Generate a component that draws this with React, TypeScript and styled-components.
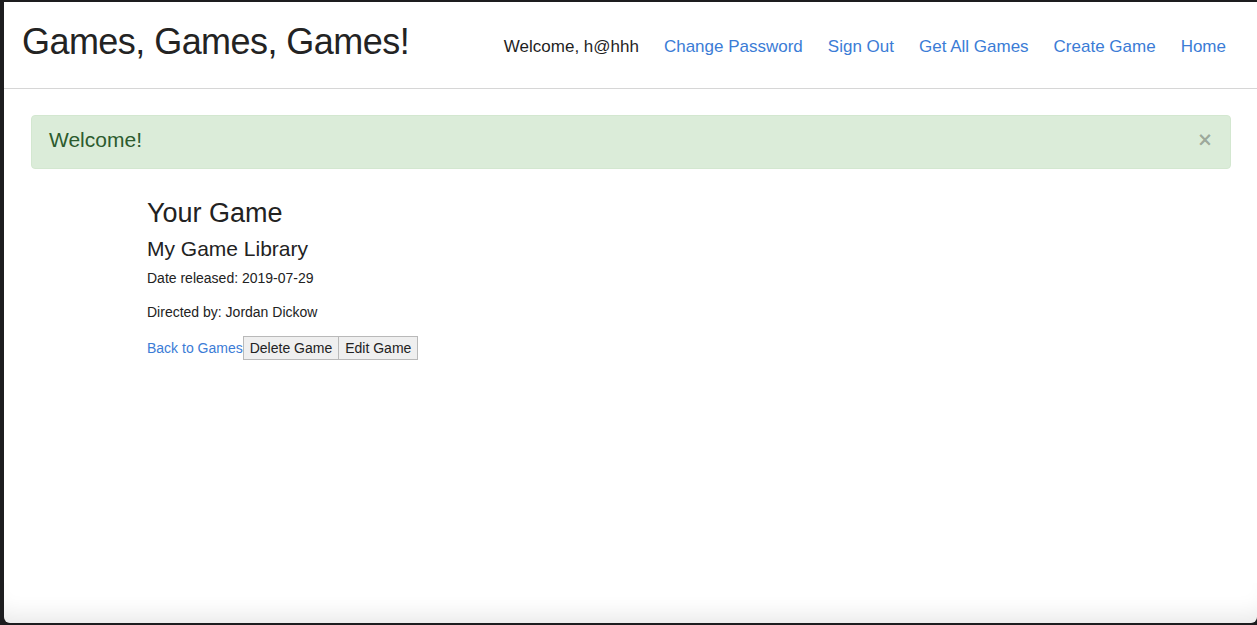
import React from 'react';
import styled, { createGlobalStyle } from 'styled-components';

const GlobalStyle = createGlobalStyle`
  html,
  body {
    margin: 0;
    padding: 0;
    background-color: #1d1d1f;
    overflow: hidden;
  }

  body {
    font-family: 'Liberation Sans', Arial, Helvetica, sans-serif;
    color: #222;
  }
`;

const Window = styled.div`
  position: relative;
  margin: 2px 0 2px 4px;
  height: 621px;
  background-color: #fff;
  border-radius: 0 0 6px 6px;
  overflow: hidden;

  &::after {
    content: '';
    position: absolute;
    left: 0;
    right: 0;
    bottom: 0;
    height: 40px;
    pointer-events: none;
    border-radius: 0 0 6px 6px;
    box-shadow: inset 0 -22px 22px -14px rgba(0, 0, 0, 0.09);
  }
`;

const Header = styled.header`
  display: flex;
  align-items: center;
  justify-content: space-between;
  height: 86px;
  padding: 0 31px 0 18px;
  border-bottom: 1px solid #d6d6d6;
`;

const Brand = styled.h1`
  margin: 0 0 6px;
  font-size: 36px;
  font-weight: 400;
  letter-spacing: -0.55px;
  color: #232323;
`;

const Nav = styled.nav`
  display: flex;
  align-items: center;
  gap: 25px;
  margin-top: 4px;
  font-size: 17px;
`;

const Greeting = styled.span`
  color: #1f1f1f;
`;

const NavLink = styled.a`
  color: #3b7cd6;
  text-decoration: none;
  cursor: pointer;
`;

const Main = styled.main`
  padding: 26px 26px 0 27px;
`;

const Alert = styled.div<{ $variant?: 'success' }>`
  display: flex;
  align-items: center;
  justify-content: space-between;
  height: 54px;
  padding: 0 17px 5px 17px;
  box-sizing: border-box;
  border-radius: 4px;
  border: 1px solid #d3e7d0;
  background-color: #dbecd9;
  color: #2c5b2e;
  font-size: 21px;
`;

const CloseButton = styled.button`
  padding: 0;
  border: 0;
  background: none;
  font-family: 'DejaVu Sans', sans-serif;
  font-size: 19px;
  font-weight: 700;
  line-height: 1;
  color: rgba(0, 0, 0, 0.3);
  cursor: pointer;
`;

const GameView = styled.section`
  margin: 27px 0 0 116px;
`;

const Title = styled.h2<{ $size: number; $lineHeight: number; $gap: number }>`
  margin: ${(p) => p.$gap}px 0 0;
  font-size: ${(p) => p.$size}px;
  line-height: ${(p) => p.$lineHeight}px;
  font-weight: 400;
  color: #222;
`;

const Detail = styled.p<{ $gap: number }>`
  margin: ${(p) => p.$gap}px 0 0;
  font-size: 14px;
  line-height: 20px;
  color: #222;
`;

const Actions = styled.div`
  display: flex;
  align-items: baseline;
  margin-top: 14px;
  font-size: 14px;
`;

const BackLink = styled.a`
  color: #3b7cd6;
  text-decoration: none;
  cursor: pointer;
`;

const ActionButton = styled.button`
  height: 24px;
  padding: 0 6px;
  border: 1px solid #b9b9b9;
  border-radius: 0;
  background-color: #efefef;
  font-family: inherit;
  font-size: 14px;
  line-height: 22px;
  color: #222;
  cursor: pointer;

  & + & {
    margin-left: -1px;
  }
`;

const navLinks = ['Change Password', 'Sign Out', 'Get All Games', 'Create Game', 'Home'];

const game = {
  title: 'My Game Library',
  released: '2019-07-29',
  director: 'Jordan Dickow'
};

export default function App() {
  return (
    <>
      <GlobalStyle />
      <Window>
        <Header>
          <Brand>Games, Games, Games!</Brand>
          <Nav>
            <Greeting>Welcome, h@hhh</Greeting>
            {navLinks.map((label) => (
              <NavLink key={label}>{label}</NavLink>
            ))}
          </Nav>
        </Header>

        <Main>
          <Alert $variant='success'>
            <span>Welcome!</span>
            <CloseButton aria-label='Close'>×</CloseButton>
          </Alert>

          <GameView>
            <Title $size={27} $lineHeight={34} $gap={0}>
              Your Game
            </Title>
            <Title $size={21} $lineHeight={26} $gap={6}>
              {game.title}
            </Title>
            <Detail $gap={6}>Date released: {game.released}</Detail>
            <Detail $gap={14}>Directed by: {game.director}</Detail>
            <Actions>
              <BackLink>Back to Games</BackLink>
              <ActionButton>Delete Game</ActionButton>
              <ActionButton>Edit Game</ActionButton>
            </Actions>
          </GameView>
        </Main>
      </Window>
    </>
  );
}
